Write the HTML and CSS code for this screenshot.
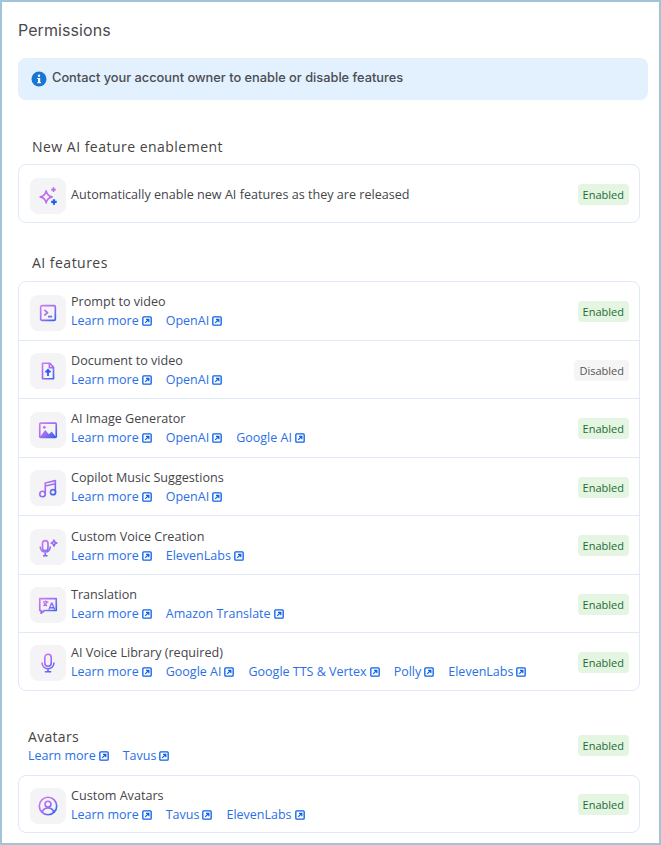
FILE: index.html
```html
<!DOCTYPE html>
<html lang="en">
<head>
<meta charset="utf-8">
<title>Permissions</title>
<link rel="stylesheet" href="styles.css">
</head>
<body>
<svg class="defs" aria-hidden="true"><defs>
<linearGradient id="g" gradientUnits="userSpaceOnUse" x1="3" y1="3" x2="21" y2="21"><stop offset="0" stop-color="#d77cf2"/><stop offset=".55" stop-color="#9a6cf2"/><stop offset="1" stop-color="#1f62f0"/></linearGradient>
<symbol id="ext" viewBox="0 0 12 12"><rect x="1" y="1" width="10" height="10" rx="1" fill="none" stroke="#0f62e6" stroke-width="1.600"/><path d="M3.800 8.300 8 4.200M4.800 4h3.400v3.400" fill="none" stroke="#0f62e6" stroke-width="1.500"/></symbol>
</defs></svg>
<main class="page">
<h1 class="title">Permissions</h1>
<div class="banner">
<svg class="info" viewBox="0 0 16 16"><circle cx="8" cy="8" r="7.500" fill="#1976d2"/><rect x="7" y="7" width="2.200" height="5" fill="#fff"/><rect x="6.200" y="7" width="2" height="1" fill="#fff"/><rect x="6.200" y="11.200" width="3.800" height="1" fill="#fff"/><circle cx="8" cy="4.800" r="1.200" fill="#fff"/></svg>
<span>Contact your account owner to enable or disable features</span>
</div>

<h2 class="heading first">New AI feature enablement</h2>
<section class="card">
<div class="row single">
<span class="tile"><svg viewBox="0 0 24 24" class="ico"><path d="M10 6.500c.8 4 2.500 5.700 6.500 6.500-4 .8-5.700 2.500-6.500 6.500-.8-4-2.500-5.700-6.500-6.500 4-.8 5.700-2.500 6.500-6.500z" fill="none" stroke="#c06cf0" stroke-width="1.800" stroke-linejoin="round"/><path d="M18 2.500v5M15.500 5h5" stroke="#b56ef0" stroke-width="1.800"/><path d="M18.500 15.500v6M15.500 18.500h6" stroke="#1f62f0" stroke-width="2.400"/></svg></span>
<div class="body"><div class="name">Automatically enable new AI features as they are released</div></div>
<span class="badge on">Enabled</span>
</div>
</section>

<h2 class="heading second">AI features</h2>
<section class="card">
<div class="row">
<span class="tile"><svg viewBox="0 0 24 24" class="ico"><rect x="4" y="4" width="16" height="16" rx="1.500" class="ln"/><path d="M8 8.500l3.500 3-3.500 3M12 16h4.500" class="ln"/></svg></span>
<div class="body"><div class="name">Prompt to video</div><div class="links"><a>Learn more<svg class="ext"><use href="#ext"/></svg></a><a>OpenAI<svg class="ext"><use href="#ext"/></svg></a></div></div>
<span class="badge on">Enabled</span>
</div>
<div class="row">
<span class="tile"><svg viewBox="0 0 24 24" class="ico"><path d="M6 3.500h8l4 4.500v12.500h-12z" class="ln"/><path d="M13.500 3.500v5h4.500" class="ln"/><path d="M12 17.500v-6.500M9.300 13.500 12 10.800l2.700 2.700" fill="none" stroke="#2a5ff0" stroke-width="2"/></svg></span>
<div class="body"><div class="name">Document to video</div><div class="links"><a>Learn more<svg class="ext"><use href="#ext"/></svg></a><a>OpenAI<svg class="ext"><use href="#ext"/></svg></a></div></div>
<span class="badge off">Disabled</span>
</div>
<div class="row">
<span class="tile"><svg viewBox="0 0 24 24" class="ico"><rect x="3" y="4.500" width="18" height="15.500" rx="1" class="ln"/><path d="M3 20l6-8 4 4.500 3-3 5 6.500z" fill="url(#g)"/><circle cx="8" cy="9" r="1.500" fill="url(#g)"/></svg></span>
<div class="body"><div class="name">AI Image Generator</div><div class="links"><a>Learn more<svg class="ext"><use href="#ext"/></svg></a><a>OpenAI<svg class="ext"><use href="#ext"/></svg></a><a>Google AI<svg class="ext"><use href="#ext"/></svg></a></div></div>
<span class="badge on">Enabled</span>
</div>
<div class="row">
<span class="tile"><svg viewBox="0 0 24 24" class="ico"><path d="M9 18V6.500l11-2.500v12" class="ln"/><path d="M9 9.800l11-2.500" class="ln"/><circle cx="6" cy="18.500" r="3" class="ln"/><circle cx="17.500" cy="16.500" r="2.800" class="ln"/></svg></span>
<div class="body"><div class="name">Copilot Music Suggestions</div><div class="links"><a>Learn more<svg class="ext"><use href="#ext"/></svg></a><a>OpenAI<svg class="ext"><use href="#ext"/></svg></a></div></div>
<span class="badge on">Enabled</span>
</div>
<div class="row">
<span class="tile"><svg viewBox="0 0 24 24" class="ico"><rect x="6" y="5" width="6" height="11" rx="3" class="ln"/><path d="M3.500 11.500c0 8 11 8 11 0M9 18.500v3M6.500 21.500h5" class="ln"/><path d="M18.500 4.500c.4 2 1.100 2.800 3 3.200-1.900.4-2.600 1.200-3 3.200-.4-2-1.100-2.800-3-3.200 1.900-.4 2.600-1.200 3-3.200z" class="ln"/></svg></span>
<div class="body"><div class="name">Custom Voice Creation</div><div class="links"><a>Learn more<svg class="ext"><use href="#ext"/></svg></a><a>ElevenLabs<svg class="ext"><use href="#ext"/></svg></a></div></div>
<span class="badge on">Enabled</span>
</div>
<div class="row">
<span class="tile"><svg viewBox="0 0 24 24" class="ico"><path d="M3 5h18v13H8l-3.500 3v-3H3z" class="ln"/><path d="M6.500 8.500h6M9.500 7v1.500M7 13c2-1 3.500-2.500 4-4.500M7.500 10c.8 1.500 2 2.500 3.500 3" class="thin"/><path d="M13 17l2.800-7h.6l2.800 7M14 15h4.500" class="thin"/></svg></span>
<div class="body"><div class="name">Translation</div><div class="links"><a>Learn more<svg class="ext"><use href="#ext"/></svg></a><a>Amazon Translate<svg class="ext"><use href="#ext"/></svg></a></div></div>
<span class="badge on">Enabled</span>
</div>
<div class="row">
<span class="tile"><svg viewBox="0 0 24 24" class="ico"><rect x="8.500" y="2.500" width="7" height="13" rx="3.500" class="ln"/><path d="M5.500 11.500c0 9 13 9 13 0M12 18.500v3M8.500 21.500h7" class="ln"/></svg></span>
<div class="body"><div class="name">AI Voice Library (required)</div><div class="links"><a>Learn more<svg class="ext"><use href="#ext"/></svg></a><a>Google AI<svg class="ext"><use href="#ext"/></svg></a><a>Google TTS &amp; Vertex<svg class="ext"><use href="#ext"/></svg></a><a>Polly<svg class="ext"><use href="#ext"/></svg></a><a>ElevenLabs<svg class="ext"><use href="#ext"/></svg></a></div></div>
<span class="badge on">Enabled</span>
</div>
</section>

<div class="group-head">
<div><h2 class="heading plain">Avatars</h2><div class="links"><a>Learn more<svg class="ext"><use href="#ext"/></svg></a><a>Tavus<svg class="ext"><use href="#ext"/></svg></a></div></div>
<span class="badge on">Enabled</span>
</div>
<section class="card">
<div class="row">
<span class="tile"><svg viewBox="0 0 24 24" class="ico"><circle cx="12" cy="12" r="9.500" class="ln"/><circle cx="12" cy="10" r="3.200" class="ln"/><path d="M5.500 19c1-3.500 3.500-4.800 6.500-4.800s5.500 1.300 6.500 4.800" class="ln"/></svg></span>
<div class="body"><div class="name">Custom Avatars</div><div class="links"><a>Learn more<svg class="ext"><use href="#ext"/></svg></a><a>Tavus<svg class="ext"><use href="#ext"/></svg></a><a>ElevenLabs<svg class="ext"><use href="#ext"/></svg></a></div></div>
<span class="badge on">Enabled</span>
</div>
</section>
</main>
</body>
</html>
```
FILE: styles.css
```css
* { box-sizing: border-box; }
html, body { margin: 0; padding: 0; height: 100%; background: #fff; }
body { overflow: hidden; }
.defs { position: absolute; width: 0; height: 0; }
.page {
  height: 845px;
  border: 2px solid #a0c4d8;
  padding: 16px 11px 0 16px;
  font-family: "Open Sans", "Noto Sans", sans-serif;
  color: #444;
  overflow: hidden;
}
.title {
  margin: 0;
  font: 400 16px/24px Inter, sans-serif;
  letter-spacing: .08px;
  color: #4a4a4f;
}
.banner {
  display: flex;
  align-items: center;
  gap: 5px;
  height: 42px;
  margin-top: 16px;
  padding: 0 0 3px 13px;
  border-radius: 8px;
  background: #e3f0fd;
  font: 500 12.800px/18px Inter, sans-serif;
  color: #4a4c52;
}
.info { width: 16px; height: 16px; flex: none; margin-top: 2px; }
.heading {
  margin: 0;
  font-size: 14px;
  font-weight: 500;
  line-height: 20px;
  letter-spacing: .48px;
  color: #444;
}
.first { margin: 37px 0 7px 14px; }
.second { margin: 30px 0 8px 14px; }
.plain { letter-spacing: .3px; }
.card {
  width: 622px;
  border: 1px solid #e0e9f8;
  border-radius: 8px;
  background: #fff;
}
.row {
  display: flex;
  align-items: center;
  gap: 5px;
  height: 58.520px;
  padding: 0 10px 0 11px;
  border-bottom: 1px solid #e0e9f8;
}
.row:last-child { border-bottom: 0; height: 56.500px; }
.row.single { height: 57px; }
.tile {
  display: flex;
  align-items: center;
  justify-content: center;
  flex: none;
  width: 36px;
  height: 36px;
  margin-top: 4px;
  border-radius: 8px;
  background: #f4f4f6;
}
.ico { width: 22px; height: 22px; }
.ln { fill: none; stroke: url(#g); stroke-width: 1.800; stroke-linejoin: round; }
.thin { fill: none; stroke: url(#g); stroke-width: 1.400; }
.body { flex: 1; min-width: 0; margin-top: 1.400px; }
.name { font-size: 12.600px; line-height: 19px; color: #45454a; }
.links { display: flex; gap: 14px; font-size: 12.500px; line-height: 19px; color: #2b6fe6; }
.links a { display: inline-flex; align-items: center; gap: 3px; }
.ext { width: 10px; height: 10px; flex: none; margin-top: 1px; }
.badge {
  flex: none;
  height: 21px;
  margin-top: 1.500px;
  padding: 0 5px;
  border-radius: 4px;
  font-size: 11px;
  line-height: 21px;
}
.on { background: #e4f5e1; color: #1c6b37; }
.off { background: #f5f5f6; color: #555; }
.group-head {
  display: flex;
  align-items: center;
  justify-content: space-between;
  width: 601px;
  margin: 36px 0 10px 10px;
}
.group-head .badge { margin-top: 0; }
.group-head .heading { line-height: 19px; }
```
